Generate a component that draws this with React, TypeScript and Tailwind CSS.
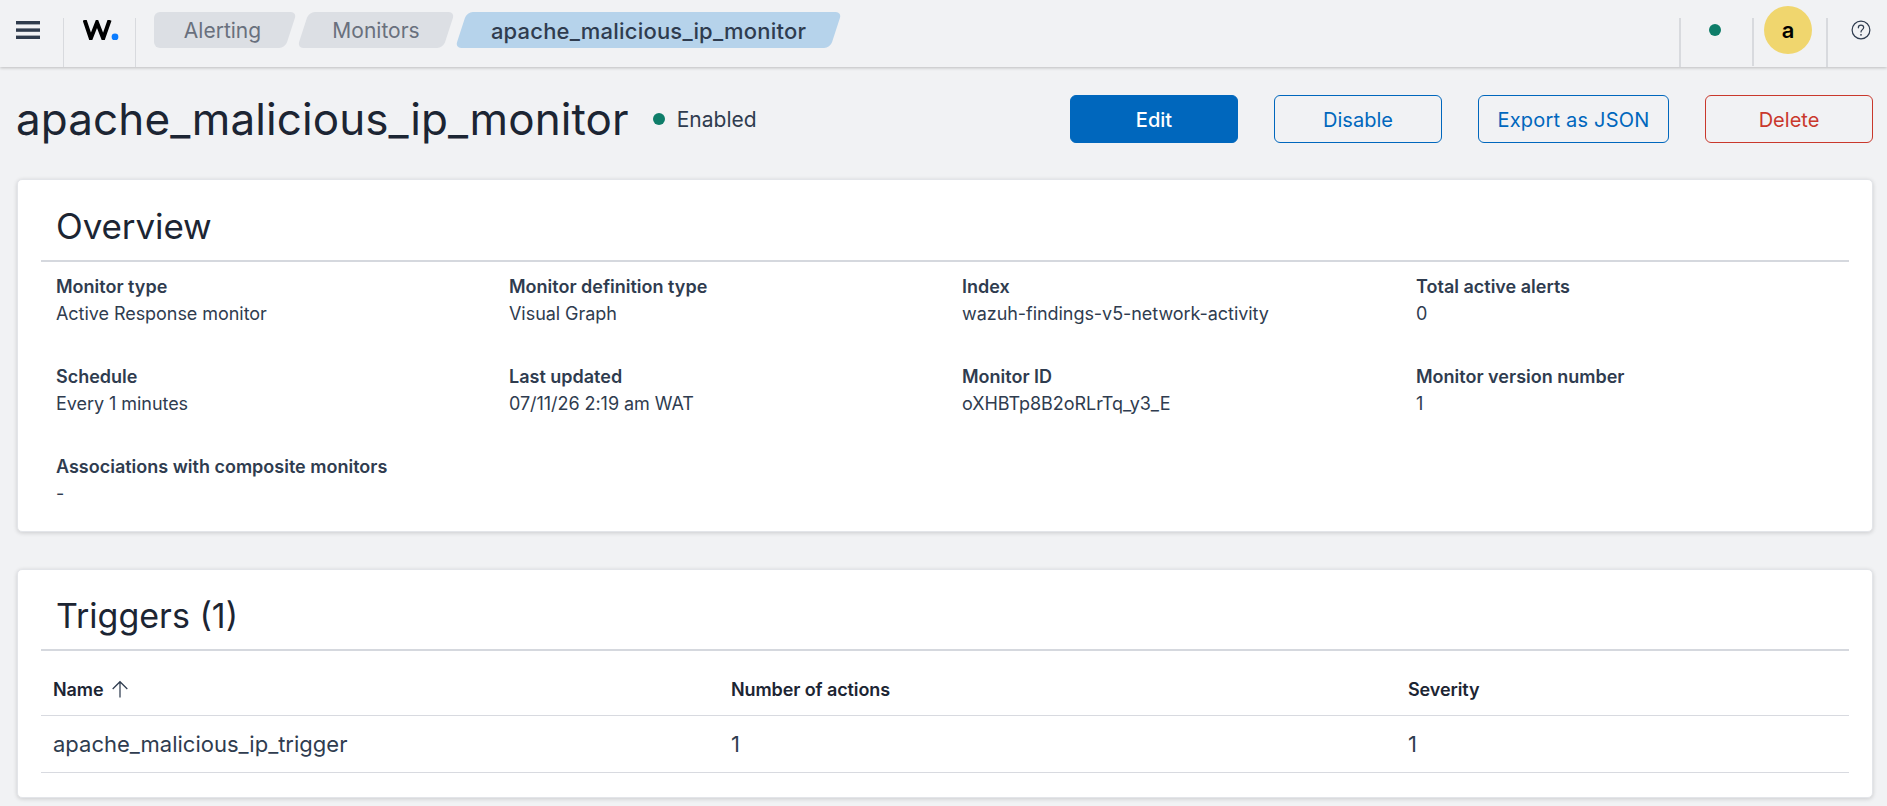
import React from "react";

function Crumb({ label, active, first, w }: { label: string; active?: boolean; first?: boolean; w: string }) {
  return (
    <div className={`relative h-9 flex items-center justify-center pt-[2px] ${w}`}>
      <div className={`absolute inset-y-0 right-0 ${first ? "left-[8px]" : "left-0"} -skew-x-[18deg] rounded-[6px] ${active ? "bg-[#b6d3eb]" : "bg-[#dcdfe4]"}`} />
      {first && <div className="absolute inset-y-0 left-0 w-6 rounded-l-[6px] bg-[#dcdfe4]" />}
      <span className={`relative ${active ? "text-[22px] font-medium tracking-[0.2px] text-[#2f3c4f]" : "text-[21px] text-[#69707d]"}`}>{label}</span>
    </div>
  );
}

function Btn({ label, cls }: { label: string; cls: string }) {
  return (
    <div className={`h-12 flex items-center justify-center pt-[2px] rounded-[6px] border text-[20px] ${cls}`}>{label}</div>
  );
}

function Field({ label, value }: { label: string; value: string }) {
  return (
    <div className="h-[90px]">
      <div className="text-[18px] leading-[24px] font-semibold text-[#2f3c4f] mt-[2px]">{label}</div>
      <div className="text-[18px] leading-[24px] tracking-[-0.05px] text-[#2f3c4f] mt-[3px]">{value}</div>
    </div>
  );
}

export default function App() {
  return (
    <div className="w-[1887px] h-[806px] overflow-hidden bg-[#f1f2f4] font-['Inter',sans-serif] text-[#1c2533]">
      <header className="h-[67px] flex bg-[#f1f2f4] shadow-[0_1px_3px_rgba(0,0,0,0.22)]">
        <div className="w-[64px] flex">
          <div className="w-[63px] flex justify-center pt-[21px]">
            <svg width="24" height="18" viewBox="0 0 24 18" className="-ml-[7px]">
              <rect x="0" y="0" width="24" height="3.4" fill="#2f3b4c" />
              <rect x="0" y="7.4" width="24" height="3.4" fill="#2f3b4c" />
              <rect x="0" y="14.6" width="24" height="3.4" fill="#2f3b4c" />
            </svg>
          </div>
          <div className="w-px mt-[18px] bg-[#d8dade]" />
        </div>
        <div className="w-[72px] flex">
          <div className="flex-1 pl-[19px] pt-[20px]">
            <svg width="36" height="20" viewBox="0 0 36 20">
              <path d="M1.6 0L7.8 18.4L14 2.5L20.2 18.4L26.6 0" fill="none" stroke="#000" strokeWidth="4" strokeLinejoin="miter" />
              <circle cx="32" cy="17" r="3.4" fill="#0a7cff" />
            </svg>
          </div>
          <div className="w-px mt-[18px] bg-[#d8dade]" />
        </div>
        <div className="ml-[18px] mt-3 flex gap-3 h-9">
          <Crumb first label="Alerting" w="w-[137px]" />
          <Crumb label="Monitors" w="w-[146px]" />
          <Crumb active label="apache_malicious_ip_monitor" w="w-[375px]" />
        </div>
        <div className="flex-1" />
        <div className="w-[73px] flex">
          <div className="w-[2px] mt-[18px] bg-[#d8dade]" />
          <div className="flex-1 flex justify-center pt-6 pr-[4px]">
            <div className="w-3 h-3 rounded-full bg-[#0e7d69]" />
          </div>
        </div>
        <div className="w-[74px] flex">
          <div className="w-[2px] mt-[18px] mb-[1px] bg-[#d8dade]" />
          <div className="flex-1 pt-[6px] pl-[10px]">
            <div className="w-12 h-12 rounded-full bg-[#f0d66e] flex items-center justify-center text-[22px] font-semibold text-black">a</div>
          </div>
        </div>
        <div className="w-[61px] flex">
          <div className="w-[2px] mt-[18px] bg-[#d8dade]" />
          <div className="flex-1 flex justify-center pt-5 pl-[7px]">
            <svg width="20" height="20" viewBox="0 0 18 18" fill="none" stroke="#2f3c4f" strokeWidth="1.1">
              <circle cx="9" cy="9" r="8" />
              <path d="M6.6 7c0-1.5 1.1-2.4 2.4-2.4s2.4.9 2.4 2.2c0 1.8-2.4 1.9-2.4 3.9" strokeLinecap="round" />
              <circle cx="9" cy="13.3" r="0.8" fill="#2f3c4f" stroke="none" />
            </svg>
          </div>
        </div>
      </header>

      <main className="pl-[17px] pr-[14px]">
        <div className="flex items-center h-[48px] mt-[28px]">
          <h1 className="text-[44px] leading-[48px] font-normal tracking-[0.09px] -ml-[1px] text-[#1c2533] whitespace-nowrap">apache_malicious_ip_monitor</h1>
          <div className="ml-6 w-3 h-3 rounded-full bg-[#0e7d69]" />
          <span className="ml-[12px] pt-[2px] text-[21px] text-[#2f3c4f]">Enabled</span>
          <div className="flex-1" />
          <div className="flex gap-9">
            <Btn label="Edit" cls="w-[168px] bg-[#0067bd] border-[#0067bd] text-white font-medium" />
            <Btn label="Disable" cls="w-[168px] border-[#0067bd] text-[#0067bd]" />
            <Btn label="Export as JSON" cls="w-[191px] border-[#0067bd] text-[#0067bd] tracking-[0.2px]" />
            <Btn label="Delete" cls="w-[168px] border-[#c9382c] text-[#c9382c]" />
          </div>
        </div>

        <section className="mt-[36px] h-[353px] bg-white rounded-[5px] border border-[#e3e5e9] shadow-[0_1px_4px_rgba(0,0,0,0.16)] px-[23px]">
          <h2 className="text-[35px] leading-[40px] tracking-[-0.1px] pl-[15px] pt-[26px] h-[80px] box-border text-[#1c2533]">Overview</h2>
          <div className="h-[2px] bg-[#d5d8de]" />
          <div className="grid grid-cols-[453px_453px_454px_1fr] pl-[15px] pt-[11px]">
            <Field label="Monitor type" value="Active Response monitor" />
            <Field label="Monitor definition type" value="Visual Graph" />
            <Field label="Index" value="wazuh-findings-v5-network-activity" />
            <Field label="Total active alerts" value="0" />
            <Field label="Schedule" value="Every 1 minutes" />
            <Field label="Last updated" value="07/11/26 2:19 am WAT" />
            <Field label="Monitor ID" value="oXHBTp8B2oRLrTq_y3_E" />
            <Field label="Monitor version number" value="1" />
            <Field label="Associations with composite monitors" value="-" />
          </div>
        </section>

        <section className="mt-[37px] h-[229px] bg-white rounded-[5px] border border-[#e3e5e9] shadow-[0_1px_4px_rgba(0,0,0,0.16)] px-[23px]">
          <h2 className="text-[34px] leading-[40px] pl-[15px] pt-[26px] h-[79px] box-border text-[#1c2533]">Triggers (1)</h2>
          <div className="h-[2px] bg-[#d5d8de]" />
          <div className="grid grid-cols-[678px_677px_1fr] h-[65px] pt-[12px] items-center border-b border-[#d8dae0] pl-[12px] text-[18px] font-semibold tracking-[-0.1px] text-[#1c2533]">
            <div className="flex items-center gap-[8px]">
              Name
              <svg width="18" height="18" viewBox="0 0 16 16" fill="none" stroke="#2f3c4f" strokeWidth="1.1">
                <path d="M8 15.5V1.5M1.5 8l6.5-6.5L14.5 8" />
              </svg>
            </div>
            <div>Number of actions</div>
            <div>Severity</div>
          </div>
          <div className="grid grid-cols-[678px_677px_1fr] h-[57px] items-center border-b border-[#d8dae0] pl-[12px] text-[22px] text-[#2f3c4f]">
            <div>apache_malicious_ip_trigger</div>
            <div>1</div>
            <div>1</div>
          </div>
        </section>
      </main>
    </div>
  );
}
